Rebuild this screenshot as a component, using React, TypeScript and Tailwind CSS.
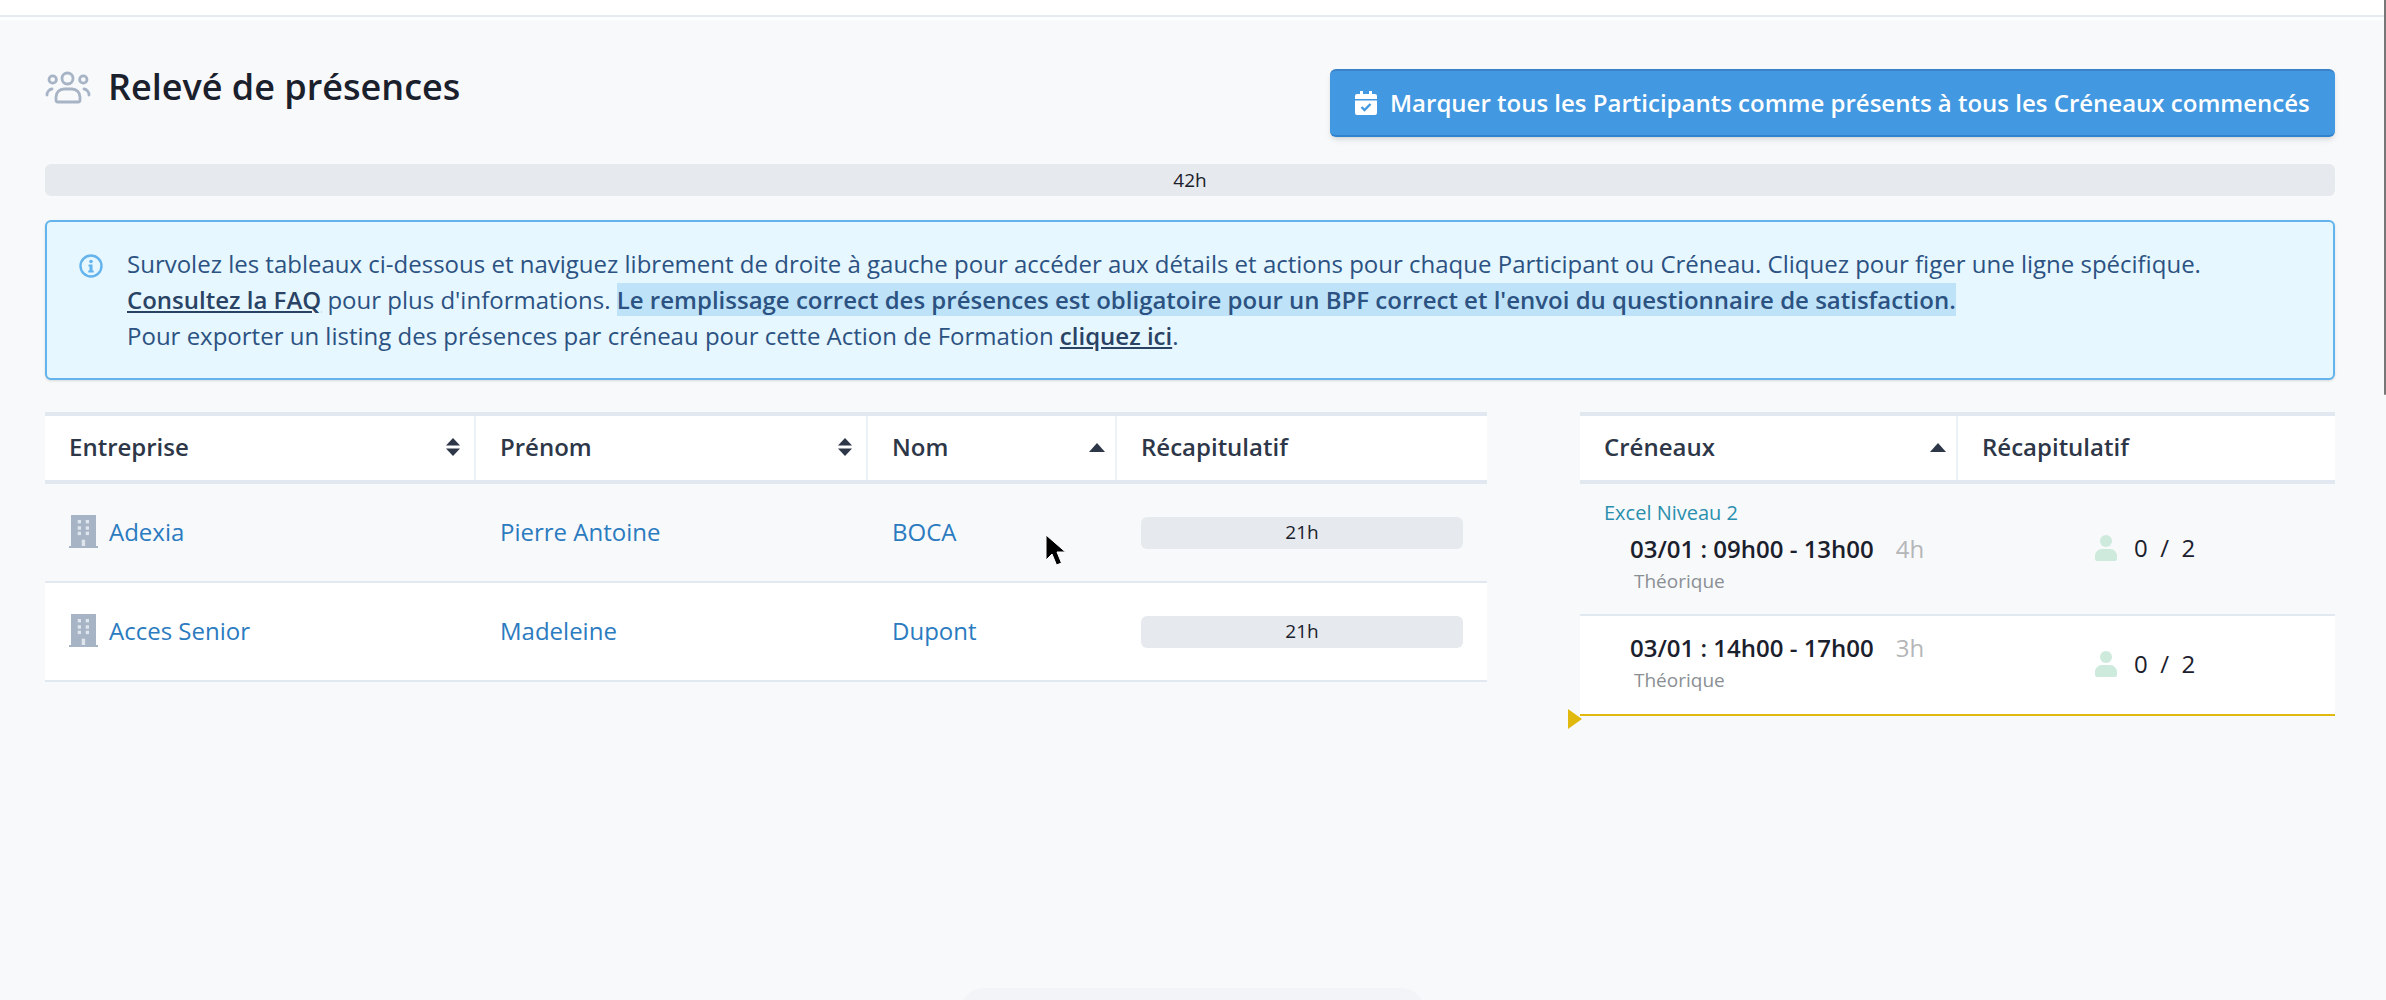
const font = '[font-family:"Open_Sans",sans-serif]';

function UsersIcon() {
  return (
    <svg width="46" height="33" viewBox="0 0 46 33" fill="none" stroke="#a6b4c6" strokeWidth="2.800" strokeLinecap="round">
      <circle cx="22.500" cy="7.500" r="5.500" />
      <circle cx="7.700" cy="8.500" r="3.700" />
      <circle cx="38.300" cy="8.500" r="3.700" />
      <path d="M11 26a8 8 0 0 1 8-8h8a8 8 0 0 1 8 8v3a2 2 0 0 1-2 2H13a2 2 0 0 1-2-2z" />
      <path d="M2 24a6 6 0 0 1 5-6" />
      <path d="M44 24a6 6 0 0 0-5-6" />
    </svg>
  );
}

function InfoIcon() {
  return (
    <svg width="24" height="24" viewBox="0 0 24 24">
      <circle cx="12" cy="12" r="10.500" fill="none" stroke="#63b3ed" strokeWidth="2.400" />
      <circle cx="12" cy="7.500" r="1.800" fill="#63b3ed" />
      <path d="M9.500 10.500h4v6h1.200v2H9.300v-2h1.200v-4h-1z" fill="#63b3ed" />
    </svg>
  );
}

function CalendarIcon() {
  return (
    <svg width="22" height="24" viewBox="0 0 22 24" className="shrink-0">
      <path d="M5 0h3v3h6V0h3v3h3a2 2 0 0 1 2 2v3H0V5a2 2 0 0 1 2-2h3z" fill="#fff" />
      <path d="M0 9.500h22V22a2 2 0 0 1-2 2H2a2 2 0 0 1-2-2z" fill="#fff" />
      <path d="M6.500 16l3 3 6-6" fill="none" stroke="#4299e1" strokeWidth="2.400" />
    </svg>
  );
}

function BuildingIcon() {
  return (
    <svg width="29" height="33" viewBox="0 0 29 33" className="shrink-0">
      <path d="M2 0h25v31h2v2H0v-2h2z" fill="#a6b4c6" />
      <g fill="#dfe5ec">
        <rect x="8.700" y="5" width="3.300" height="3.400" />
        <rect x="16.700" y="5" width="3.300" height="3.400" />
        <rect x="8.700" y="11.300" width="3.300" height="3.400" />
        <rect x="16.700" y="11.300" width="3.300" height="3.400" />
        <rect x="8.700" y="16.700" width="3.300" height="3.400" />
        <rect x="16.700" y="16.700" width="3.300" height="3.400" />
        <rect x="12.700" y="24.700" width="3.400" height="6.300" />
      </g>
    </svg>
  );
}

function SortIcon() {
  return (
    <svg width="16" height="18" viewBox="0 0 16 18" className="mr-px shrink-0">
      <path d="M8 0l7 7.500H1z" fill="#2d3748" />
      <path d="M8 18l7-7.500H1z" fill="#2d3748" />
    </svg>
  );
}

function SortUpIcon() {
  return (
    <svg width="16" height="9" viewBox="0 0 16 9" className="-mr-[2px] shrink-0">
      <path d="M8 0l8 9H0z" fill="#2d3748" />
    </svg>
  );
}

function UserIcon() {
  return (
    <svg width="22" height="26" viewBox="0 0 22 26" className="shrink-0">
      <circle cx="11" cy="6" r="6" fill="#cdeadd" />
      <path d="M0 22a7 7 0 0 1 7-8h8a7 7 0 0 1 7 8v2a2 2 0 0 1-2 2H2a2 2 0 0 1-2-2z" fill="#cdeadd" />
    </svg>
  );
}

function Cursor() {
  return (
    <svg width="22" height="33" viewBox="0 0 22 33" className="absolute left-[1045px] top-[534px]">
      <path d="M1 1v25l6-6 4.500 11 5-2-4.500-11h8.500z" fill="#000" stroke="#fff" strokeWidth="1" />
    </svg>
  );
}

function Hours({ value }: { value: string }) {
  return (
    <div className="flex h-8 items-center justify-center rounded-md bg-[#e6e9ed] text-[19px] text-[#1a202c]">
      {value}
    </div>
  );
}

function HeadCell({ label, className, sort }: { label: string; className: string; sort?: 'both' | 'up' }) {
  return (
    <div className={`flex items-center justify-between border-r-2 border-[#edf2f7] pb-[2px] pl-6 pr-3 last:border-r-0 ${className}`}>
      <span className="text-[24px] font-semibold text-[#2d3748]">{label}</span>
      {sort === 'both' && <SortIcon />}
      {sort === 'up' && <SortUpIcon />}
    </div>
  );
}

function ParticipantRow(props: { company: string; first: string; last: string; white?: boolean }) {
  const link = 'text-[24px] text-[#2b7bc0]';
  return (
    <div className={`flex h-[99px] items-center border-b-2 border-[#e2e8f0] ${props.white ? 'bg-white' : ''}`}>
      <div className="flex w-[431px] items-center gap-[11px] pb-[2px] pl-6">
        <BuildingIcon />
        <span className={link}>{props.company}</span>
      </div>
      <div className={`w-[392px] pb-[2px] pl-6 ${link}`}>{props.first}</div>
      <div className={`w-[249px] pb-[2px] pl-6 ${link}`}>{props.last}</div>
      <div className="flex-1 px-6">
        <Hours value="21h" />
      </div>
    </div>
  );
}

function SlotRow(props: { title?: string; time: string; hours: string; className: string; white?: boolean }) {
  return (
    <div className={`flex items-center ${props.className} ${props.white ? 'bg-white' : ''}`}>
      <div className={`w-[515px] pl-6 ${props.title ? 'pb-[3px]' : 'pb-[7px]'}`}>
        {props.title && <div className="mb-[5px] text-[20px] leading-[26px] text-[#2a8fae]">{props.title}</div>}
        <div className="flex items-center pl-[26px] text-[24px] font-semibold leading-[36px] text-[#1a202c]">
          {props.time}
          <span className="ml-[22px] font-normal text-[#b4b6b8]">{props.hours}</span>
        </div>
        <div className="pl-[30px] text-[19px] leading-[28px] text-[#8a8f94]">Théorique</div>
      </div>
      <div className="flex items-center gap-[17px] pb-[2px] text-[24px] text-[#1a202c]">
        <UserIcon />
        <span className="whitespace-pre">0  /  2</span>
      </div>
    </div>
  );
}

export default function App() {
  return (
    <div className={`relative min-h-[1000px] overflow-hidden bg-[#f8f9fb] ${font}`}>
      <div className="h-[17px] border-b-2 border-[#e6ebf1] bg-white" />
      <div className="h-[3px] bg-[#fdfeff]" />

      <div className="pl-[45px] pr-[51px]">
        <div className="flex items-start justify-between pt-[49px]">
          <div className="flex items-center gap-[17px]">
            <UsersIcon />
            <h1 className="text-[36px] font-semibold leading-[36px] text-[#1a202c]">Relevé de présences</h1>
          </div>
          <button className="flex h-[68px] w-[1005px] items-center gap-[13px] rounded-md border-y-2 border-t-[#3b82c8] border-b-[#3182ce] bg-[#4299e1] pl-[25px] text-[24px] font-semibold text-white shadow-md">
            <CalendarIcon />
            Marquer tous les Participants comme présents à tous les Créneaux commencés
          </button>
        </div>

        <div className="mt-[27px] flex h-8 items-center justify-center rounded-md bg-[#e6e9ed] text-[19px] text-[#1a202c]">
          42h
        </div>

        <div className="mt-6 flex h-[160px] rounded-md border-2 border-[#63b3ed] bg-[#e6f7ff] pl-[32px] pt-6 text-[24px] leading-[36px] text-[#2c5282] shadow-sm">
          <div className="pt-2">
            <InfoIcon />
          </div>
          <div className="ml-6">
            <p>
              Survolez les tableaux ci-dessous et naviguez librement de droite à gauche pour accéder aux détails et actions pour chaque Participant ou Créneau. Cliquez pour figer une ligne spécifique.
            </p>
            <p>
              <a className="font-semibold text-[#2a4365] underline">Consultez la FAQ</a> pour plus d'informations.{' '}
              <span className="bg-[#bee3f8] font-semibold">
                Le remplissage correct des présences est obligatoire pour un BPF correct et l'envoi du questionnaire de satisfaction.
              </span>
            </p>
            <p>
              Pour exporter un listing des présences par créneau pour cette Action de Formation{' '}
              <a className="font-semibold text-[#2a4365] underline">cliquez ici</a>.
            </p>
          </div>
        </div>

        <div className="mt-8 flex items-start gap-[93px]">
          <div className="w-[1442px]">
            <div className="flex h-[72px] border-y-4 border-[#e2e8f0] bg-white">
              <HeadCell label="Entreprise" className="w-[431px]" sort="both" />
              <HeadCell label="Prénom" className="w-[392px]" sort="both" />
              <HeadCell label="Nom" className="w-[249px]" sort="up" />
              <HeadCell label="Récapitulatif" className="flex-1" />
            </div>
            <ParticipantRow company="Adexia" first="Pierre Antoine" last="BOCA" />
            <ParticipantRow company="Acces Senior" first="Madeleine" last="Dupont" white />
          </div>

          <div className="relative flex-1">
            <div className="flex h-[72px] border-y-4 border-[#e2e8f0] bg-white">
              <HeadCell label="Créneaux" className="w-[378px]" sort="up" />
              <HeadCell label="Récapitulatif" className="flex-1" />
            </div>
            <SlotRow title="Excel Niveau 2" time="03/01 : 09h00 - 13h00" hours="4h" className="h-[132px] border-b-2 border-[#e2e8f0]" />
            <SlotRow time="03/01 : 14h00 - 17h00" hours="3h" className="h-[100px] border-b-2 border-[#e1b90e]" white />
            <div className="absolute bottom-[-13px] left-[-12px] h-0 w-0 border-y-[10px] border-l-[14px] border-y-transparent border-l-[#e1b90e]" />
          </div>
        </div>
      </div>

      <Cursor />
      <div className="absolute bottom-[-20px] left-[960px] h-8 w-[465px] rounded-t-[24px] bg-[#f3f4f7]" />
      <div className="absolute right-0 top-0 h-[395px] w-[2px] rounded-b-sm bg-[#777777]" />
    </div>
  );
}
